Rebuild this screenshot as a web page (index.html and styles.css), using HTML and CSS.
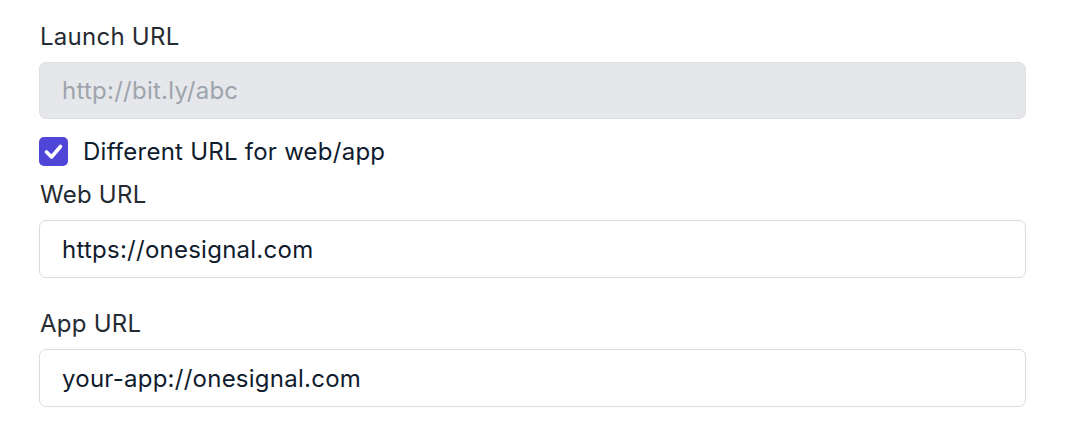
FILE: index.html
```html
<!DOCTYPE html>
<html lang="en">
<head>
<meta charset="utf-8">
<title>Launch URL</title>
<link rel="stylesheet" href="styles.css">
</head>
<body>
<form class="form">
  <div class="field">
    <label class="label" for="launch">Launch URL</label>
    <input class="input" id="launch" type="text" placeholder="http://bit.ly/abc" disabled>
  </div>
  <label class="check">
    <span class="box">
      <svg viewBox="0 0 29 29" width="29" height="29" aria-hidden="true">
        <path d="M7.5 15 L12.5 20 L21.5 9.5" fill="none" stroke="#fff" stroke-width="3.6" stroke-linecap="round" stroke-linejoin="round"/>
      </svg>
    </span>
    <span class="check-text">Different URL for web/app</span>
  </label>
  <div class="field field-web">
    <label class="label" for="web">Web URL</label>
    <input class="input" id="web" type="text" value="https://onesignal.com">
  </div>
  <div class="field field-app">
    <label class="label" for="app">App URL</label>
    <input class="input" id="app" type="text" value="your-app://onesignal.com">
  </div>
</form>
</body>
</html>
```
FILE: styles.css
```css
* { box-sizing: border-box; }
html, body { margin: 0; padding: 0; background: #ffffff; }
body {
  font-family: Inter, "Noto Sans", "Liberation Sans", sans-serif;
  font-size: 24px;
  letter-spacing: 0.25px;
  color: #111827;
}
.form {
  width: 987px;
  margin-left: 39px;
  padding-top: 21px;
  display: flex;
  flex-direction: column;
}
.field { display: flex; flex-direction: column; }
.label {
  display: block;
  line-height: 32px;
  color: #252b33;
  margin-bottom: 9px;
  padding-left: 1px;
}
.input {
  width: 100%;
  height: 57px;
  border: 1px solid #d9dbde;
  border-radius: 7px;
  padding: 0 22px;
  font-family: inherit;
  font-size: 24px;
  letter-spacing: 0.25px;
  color: #0f1c2e;
  background: #ffffff;
  outline: none;
}
.field-web .input, .field-app .input { height: 58px; }
.input:disabled { background: #e5e7eb; border-color: #dcdee1; }
.input::placeholder { color: #9ea4ac; opacity: 1; }
.check {
  display: flex;
  align-items: center;
  gap: 15px;
  margin-top: 18px;
  height: 29px;
}
.box {
  width: 29px;
  height: 29px;
  border-radius: 5px;
  background: #4f46d8;
  display: flex;
}
.check-text { color: #0f1c2e; line-height: 29px; }
.field-web { margin-top: 13px; }
.field-app { margin-top: 30px; }
```
